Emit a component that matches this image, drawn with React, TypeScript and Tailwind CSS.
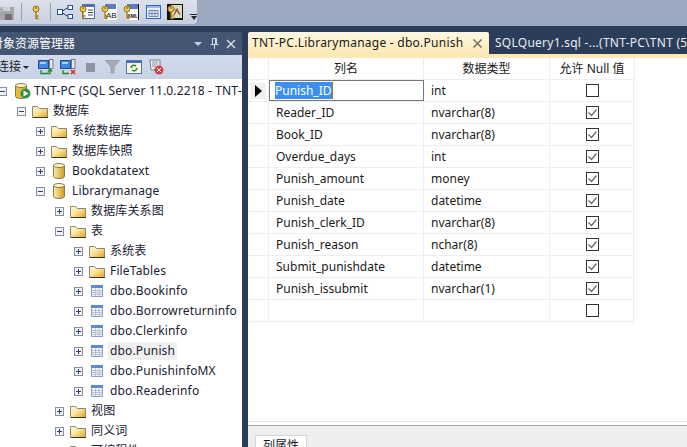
const FONT = "font-['Noto_Sans','Noto_Sans_CJK_SC',sans-serif]";

const columns = [
  ["Punish_ID", "int", false],
  ["Reader_ID", "nvarchar(8)", true],
  ["Book_ID", "nvarchar(8)", true],
  ["Overdue_days", "int", true],
  ["Punish_amount", "money", true],
  ["Punish_date", "datetime", true],
  ["Punish_clerk_ID", "nvarchar(8)", true],
  ["Punish_reason", "nchar(8)", true],
  ["Submit_punishdate", "datetime", true],
  ["Punish_issubmit", "nvarchar(1)", true],
  ["", "", false],
] as const;

function Expander({ open }: { open?: boolean }) {
  return (
    <svg width="9" height="9" viewBox="0 0 9 9" className="shrink-0">
      <rect x="0.5" y="0.5" width="8" height="8" fill="#f1f2f5" stroke="#8a8f9c" />
      <path d="M2 4.5h5" stroke="#333f66" />
      {!open && <path d="M4.5 2v5" stroke="#333f66" />}
    </svg>
  );
}

function Folder() {
  return (
    <svg width="16" height="13" viewBox="0 0 16 13" className="shrink-0">
      <defs>
        <linearGradient id="fld" x1="0" y1="0" x2="1" y2="1">
          <stop offset="0" stopColor="#fff8dc" />
          <stop offset="0.45" stopColor="#fbe49a" />
          <stop offset="1" stopColor="#dfa326" />
        </linearGradient>
      </defs>
      <path d="M.5 12.5V1.5h5l2 2h8v9z" fill="url(#fld)" stroke="#8c8872" />
      <path d="M1 12.5h15" stroke="#3a3524" />
    </svg>
  );
}

function Database() {
  return (
    <svg width="12" height="16" viewBox="0 0 12 16" className="shrink-0">
      <defs>
        <linearGradient id="dbg" x1="0" y1="0" x2="1" y2="0">
          <stop offset="0" stopColor="#fbeeb0" />
          <stop offset="1" stopColor="#d09a1e" />
        </linearGradient>
      </defs>
      <path d="M.5 2.5v11c0 1 2.5 2 5.5 2s5.5-1 5.5-2v-11z" fill="url(#dbg)" stroke="#8a7a50" />
      <ellipse cx="6" cy="2.5" rx="5.5" ry="2" fill="#fdf4c8" stroke="#8a7a50" />
    </svg>
  );
}

function Table() {
  return (
    <svg width="12" height="12" viewBox="0 0 12 12" className="shrink-0">
      <rect x="0.5" y="0.5" width="11" height="11" fill="#f2f4f9" stroke="#8fa3c8" />
      <rect x="0" y="0" width="12" height="3" fill="#5f88cf" />
      <path d="M1 5.5h10M1 7.5h10M1 9.5h10M4.5 3.5v7.5M8 3.5v7.500" stroke="#b7c1d4" />
    </svg>
  );
}

function Server() {
  return (
    <svg width="16" height="16" viewBox="0 0 16 16" className="ml-[4px] shrink-0">
      <path d="M.5 2.5v11c0 1 2.5 2 5.5 2s5.5-1 5.5-2v-11z" fill="#e5b93f" stroke="#8a7a50" />
      <ellipse cx="6" cy="2.5" rx="5.5" ry="2" fill="#fdf4c8" stroke="#8a7a50" />
      <circle cx="10.5" cy="10.5" r="5" fill="#2f8f3a" />
      <path d="M8.5 7.5l5 3-5 3z" fill="#fff" />
    </svg>
  );
}

function KeyIcon() {
  return (
    <g>
      <circle cx="4" cy="5" r="3" fill="#efc84e" stroke="#96731a" />
      <circle cx="4" cy="4" r="0.8" fill="#5f4a10" />
      <path d="M4 8v7M4 12h2.5M4 14.5h2.5" stroke="#a57f1c" strokeWidth="1.5" />
    </g>
  );
}

function Separator({ className }: { className: string }) {
  return <div className={`h-[18px] w-px shrink-0 bg-[#9aa0ae] ${className}`} />;
}

function TopToolbar() {
  return (
    <div className="h-[26px] shrink-0 bg-[#9ba8c0]">
      <div className="flex h-[24px] w-[197px] items-center overflow-hidden rounded-br-[4px] bg-gradient-to-b from-[#dce1eb] to-[#c8cfdf]">
        <svg width="15" height="15" viewBox="0 0 15 15" className="shrink-0">
          <path d="M0 2h14v13H0z" fill="#a3a5a8" />
          <path d="M3 2h7v4H3z" fill="#cfd1d4" />
          <path d="M5 9h7v6H5z" fill="#6f7174" />
          <path d="M0 3h5M0 6h3" stroke="#c8cad0" />
        </svg>
        <Separator className="ml-[6px]" />
        <svg width="9" height="16" viewBox="0 0 9 16" className="ml-[10px] shrink-0">
          <KeyIcon />
        </svg>
        <Separator className="ml-[9px]" />
        <svg width="16" height="14" viewBox="0 0 16 14" className="ml-[6px] shrink-0">
          <path d="M4 7L11 2.5M4 7l7 4.5" stroke="#1f3a70" />
          <rect x="0.5" y="4.5" width="5" height="5" fill="#fff" stroke="#1f4ea0" />
          <rect x="11" y="0.5" width="4.5" height="4" fill="#fff" stroke="#1f4ea0" />
          <rect x="11" y="9.5" width="4.5" height="4" fill="#fff" stroke="#1f4ea0" />
        </svg>
        <svg width="16" height="16" viewBox="0 0 16 16" className="ml-[6px] shrink-0">
          <rect x="3.5" y="0.5" width="12" height="14" fill="#fff" stroke="#4f6ea8" />
          <rect x="3" y="0" width="13" height="3" fill="#4f6ea8" />
          <path d="M9 6h5M9 8.5h5M9 11h5" stroke="#3e4a66" />
          <KeyIcon />
        </svg>
        <svg width="16" height="16" viewBox="0 0 16 16" className="ml-[6px] shrink-0">
          <rect x="3" y="0" width="13" height="16" fill="#fff" />
          <rect x="4" y="0" width="11" height="5" fill="#5b7cb8" />
          <text x="5" y="14" fontSize="8" fill="#111" fontFamily="Liberation Sans">AB</text>
          <KeyIcon />
        </svg>
        <svg width="16" height="16" viewBox="0 0 16 16" className="ml-[6px] shrink-0">
          <rect x="3" y="0" width="13" height="16" fill="#fff" />
          <rect x="4" y="0" width="11" height="5" fill="#5b7cb8" />
          <rect x="15" y="0" width="1" height="16" fill="#111" />
          <text x="4.5" y="14" fontSize="5" fontWeight="700" fill="#111" fontFamily="Liberation Sans">XML</text>
          <KeyIcon />
        </svg>
        <svg width="15" height="14" viewBox="0 0 15 14" className="ml-[7px] shrink-0">
          <rect x="0.5" y="0.5" width="14" height="13" fill="#e8edf7" stroke="#2f62c4" />
          <rect x="1" y="1" width="13" height="2" fill="#9db8e8" />
          <path d="M3 5.5h9v6H3zM3 8.5h9M6 5.5v6M9 5.5v6" stroke="#7487ad" fill="none" />
        </svg>
        <svg width="16" height="16" viewBox="0 0 16 16" className="ml-[6px] shrink-0">
          <rect width="16" height="16" fill="#111" />
          <rect x="4" y="1" width="11" height="13" fill="#d8dcc0" />
          <path d="M7 11l3-6 3 6" stroke="#c03a2a" strokeWidth="1.2" fill="none" />
          <path d="M7 5l6 5" stroke="#3a8a3a" />
          <KeyIcon />
        </svg>
        <div className="ml-[7px] flex w-[7px] flex-col items-center gap-[1px] pt-[9px]">
          <div className="h-[1px] w-[7px] bg-[#222]" />
          <div className="h-0 w-0 border-x-[3.5px] border-t-[4px] border-x-transparent border-t-[#222]" />
        </div>
      </div>
    </div>
  );
}

function ExplorerToolbar() {
  return (
    <div className="flex h-[24px] shrink-0 items-center overflow-hidden bg-gradient-to-b from-[#d3dbeb] to-[#c8d2e5] text-[12px] text-[#222]">
      <span className="-ml-[3px] whitespace-nowrap">连接</span>
      <div className="ml-[2px] h-0 w-0 shrink-0 border-x-[3px] border-t-[3px] border-x-transparent border-t-[#222]" />
      <svg width="16" height="16" viewBox="0 0 16 16" className="ml-[9px] shrink-0">
        <rect x="0.5" y="1.5" width="10" height="8" fill="#3d86e6" stroke="#24508f" />
        <rect x="2" y="3" width="6" height="2" fill="#a9d0fa" />
        <rect x="11.5" y="0.5" width="3.5" height="9" fill="#e3e6ec" stroke="#556" strokeWidth="0.7" />
        <path d="M3 11v3.500h9V11M10 12.500l2-2.500 2 2.500" stroke="#1c8a2a" strokeWidth="1.3" fill="none" />
      </svg>
      <svg width="16" height="16" viewBox="0 0 16 16" className="ml-[6px] shrink-0">
        <rect x="0.5" y="1.5" width="10" height="8" fill="#3d86e6" stroke="#24508f" />
        <rect x="2" y="3" width="6" height="2" fill="#a9d0fa" />
        <rect x="11.5" y="0.5" width="3.5" height="9" fill="#e3e6ec" stroke="#556" strokeWidth="0.7" />
        <path d="M3 11v3.500h6" stroke="#1c8a2a" strokeWidth="1.3" fill="none" />
        <path d="M11 11l4 4M15 11l-4 4" stroke="#d8261c" strokeWidth="1.5" />
      </svg>
      <div className="ml-[10px] h-[9px] w-[9px] shrink-0 bg-[#8d93a0]" />
      <svg width="15" height="14" viewBox="0 0 15 14" className="ml-[10px] shrink-0">
        <path d="M.5.5h14L9 7v6H6V7z" fill="#a9acb3" stroke="#9a9ea8" />
      </svg>
      <svg width="16" height="14" viewBox="0 0 16 14" className="ml-[6px] shrink-0">
        <rect x="0.5" y="0.5" width="15" height="13" fill="#f7f4df" stroke="#5776ab" />
        <rect x="1" y="1" width="14" height="2" fill="#3e6cb8" />
        <path d="M5 8a3 3 0 0 1 5-2M11 8a3 3 0 0 1-5 2" stroke="#1e8f2c" strokeWidth="1.5" fill="none" />
      </svg>
      <svg width="16" height="16" viewBox="0 0 16 16" className="ml-[6px] shrink-0">
        <path d="M2 1h10v10H3z" fill="#eceef2" stroke="#7c808c" />
        <path d="M4 3h6M4 5h6M4 7h4" stroke="#8f949f" />
        <circle cx="11" cy="11" r="4.5" fill="#d8404a" />
        <path d="M9 9l4 4M13 9l-4 4" stroke="#fff" />
      </svg>
    </div>
  );
}

function TreeRow({ depth, open, icon, label, selected }: { depth: number; open?: boolean; icon: React.ReactNode; label: string; selected?: boolean }) {
  return (
    <div className="flex h-5 shrink-0 items-center whitespace-nowrap" style={{ marginLeft: depth * 19 - 2 }}>
      <Expander open={open} />
      <div className="flex w-[27px] shrink-0 justify-center">{icon}</div>
      <span className={`-ml-[2px] flex h-[18px] items-center px-[2px] ${selected ? "bg-[#f0f0f0]" : ""}`}>{label}</span>
    </div>
  );
}

function Explorer() {
  return (
    <div className="flex w-[242px] shrink-0 flex-col overflow-hidden">
      <div className="flex h-[23px] shrink-0 items-center justify-between rounded-t-[2px] bg-[#445673] pr-[6px] text-[12px] text-white">
        <span className="-ml-[9px] whitespace-nowrap">对象资源管理器</span>
        <div className="flex items-center gap-[7px]">
          <div className="mr-[1px] h-0 w-0 border-x-[4px] border-t-[4px] border-x-transparent border-t-[#c8d0e0]" />
          <svg width="9" height="11" viewBox="0 0 9 11">
            <path d="M2.5 .5h4v6h-4zM.5 6.5h8M4.500 7v4M5.500 1v5" stroke="#d5dbe7" fill="none" />
          </svg>
          <svg width="10" height="10" viewBox="0 0 10 10">
            <path d="M1 1l8 8M9 1l-8 8" stroke="#d5dbe7" strokeWidth="1.5" />
          </svg>
        </div>
      </div>
      <ExplorerToolbar />
      <div className="flex flex-1 flex-col overflow-hidden bg-white pt-[2px] text-[12px] tracking-[0.15px] text-[#1a2233]">
        <TreeRow depth={0} open icon={<Server />} label="TNT-PC (SQL Server 11.0.2218 - TNT-PC\TNT)" />
        <TreeRow depth={1} open icon={<Folder />} label="数据库" />
        <TreeRow depth={2} icon={<Folder />} label="系统数据库" />
        <TreeRow depth={2} icon={<Folder />} label="数据库快照" />
        <TreeRow depth={2} icon={<Database />} label="Bookdatatext" />
        <TreeRow depth={2} open icon={<Database />} label="Librarymanage" />
        <TreeRow depth={3} icon={<Folder />} label="数据库关系图" />
        <TreeRow depth={3} open icon={<Folder />} label="表" />
        <TreeRow depth={4} icon={<Folder />} label="系统表" />
        <TreeRow depth={4} icon={<Folder />} label="FileTables" />
        <TreeRow depth={4} icon={<Table />} label="dbo.Bookinfo" />
        <TreeRow depth={4} icon={<Table />} label="dbo.Borrowreturninfo" />
        <TreeRow depth={4} icon={<Table />} label="dbo.Clerkinfo" />
        <TreeRow depth={4} icon={<Table />} label="dbo.Punish" selected />
        <TreeRow depth={4} icon={<Table />} label="dbo.PunishinfoMX" />
        <TreeRow depth={4} icon={<Table />} label="dbo.Readerinfo" />
        <TreeRow depth={3} icon={<Folder />} label="视图" />
        <TreeRow depth={3} icon={<Folder />} label="同义词" />
        <TreeRow depth={3} icon={<Folder />} label="可编程性" />
      </div>
    </div>
  );
}

function Checkbox({ checked }: { checked: boolean }) {
  return (
    <svg width="13" height="13" viewBox="0 0 13 13">
      <rect x="0.5" y="0.5" width="12" height="12" fill="#fff" stroke="#333" />
      {checked && <path d="M2.5 6.5l3 3 5-6" stroke="#666" strokeWidth="1.2" fill="none" />}
    </svg>
  );
}

function TableDesigner() {
  return (
    <div className="flex min-w-0 flex-1 flex-col overflow-hidden">
      <div className="flex h-[22px] shrink-0 items-stretch whitespace-nowrap text-[12px] tracking-[0.25px]">
        <div className="flex w-[241px] shrink-0 items-center gap-[10px] rounded-t-[2px] bg-gradient-to-b from-[#fdf7e2] to-[#fde9b4] pl-[4px] text-[#1a1a1a]">
          <span>TNT-PC.Librarymanage - dbo.Punish</span>
          <svg width="9" height="9" viewBox="0 0 9 9" className="shrink-0">
            <path d="M.5.5l8 8M8.5.5l-8 8" stroke="#75705c" strokeWidth="1.5" />
          </svg>
        </div>
        <div className="flex items-center bg-[#2c3d5a] pl-[6px] text-[#e8ecf4]">SQLQuery1.sql -...(TNT-PC\TNT (52))*</div>
      </div>
      <div className="h-[4px] shrink-0 bg-[#fde9b4]" />
      <div className="flex flex-1 flex-col bg-white">
        <div className="flex-1 text-[12px] text-[#1a1a1a]">
          <div className="grid w-[387px] grid-cols-[21px_155px_126px_85px] border-b border-[#eeeeee]">
            <div className="h-[21px] border-r border-[#eeeeee]" />
            <div className="flex items-center justify-center border-r border-[#eeeeee]">列名</div>
            <div className="flex items-center justify-center border-r border-[#eeeeee]">数据类型</div>
            <div className="flex items-center justify-center border-r border-[#eeeeee]">允许 Null 值</div>
          </div>
          {columns.map(([name, type, nullable], i) => (
            <div key={i} className="grid h-[22px] w-[386px] grid-cols-[21px_155px_126px_84px] border-b border-r border-[#eeeeee]">
              <div className="flex items-center justify-center border-r border-[#eeeeee]">
                {i === 0 && (
                  <div className="flex h-[16px] w-[15px] items-center justify-center bg-[#f0f0f0]">
                    <div className="h-0 w-0 border-y-[6px] border-l-[7px] border-y-transparent border-l-black" />
                  </div>
                )}
              </div>
              {i === 0 ? (
                <div className="flex items-center border border-[#777] pl-[5px]">
                  <span className="flex h-[17px] items-center border-r border-[#c86a10] bg-[#3a8ff0] text-white">{name}</span>
                </div>
              ) : (
                <div className="flex items-center border-r border-[#eeeeee] pl-[7px]">{name}</div>
              )}
              <div className="flex items-center border-r border-[#eeeeee] pl-[7px]">{type}</div>
              <div className="flex items-center justify-center">
                <Checkbox checked={nullable} />
              </div>
            </div>
          ))}
        </div>
        <div className="h-[4px] shrink-0 border-t border-[#e4e4e4]" />
        <div className="h-[22px] shrink-0 border-t border-[#a8a8a8] bg-[#eeeeee] pl-[7px] pt-[9px]">
          <div className="flex h-[24px] w-[52px] justify-center border border-[#d5d5d5] bg-white pt-[1px] text-[12px] text-[#1a1a1a]">列属性</div>
        </div>
      </div>
    </div>
  );
}

export default function App() {
  return (
    <div className={`flex h-[447px] w-[687px] flex-col overflow-hidden bg-[#2c3d5a] ${FONT}`}>
      <TopToolbar />
      <div className="mt-[6px] flex min-h-0 flex-1 gap-[6px] overflow-hidden">
        <Explorer />
        <TableDesigner />
      </div>
    </div>
  );
}
